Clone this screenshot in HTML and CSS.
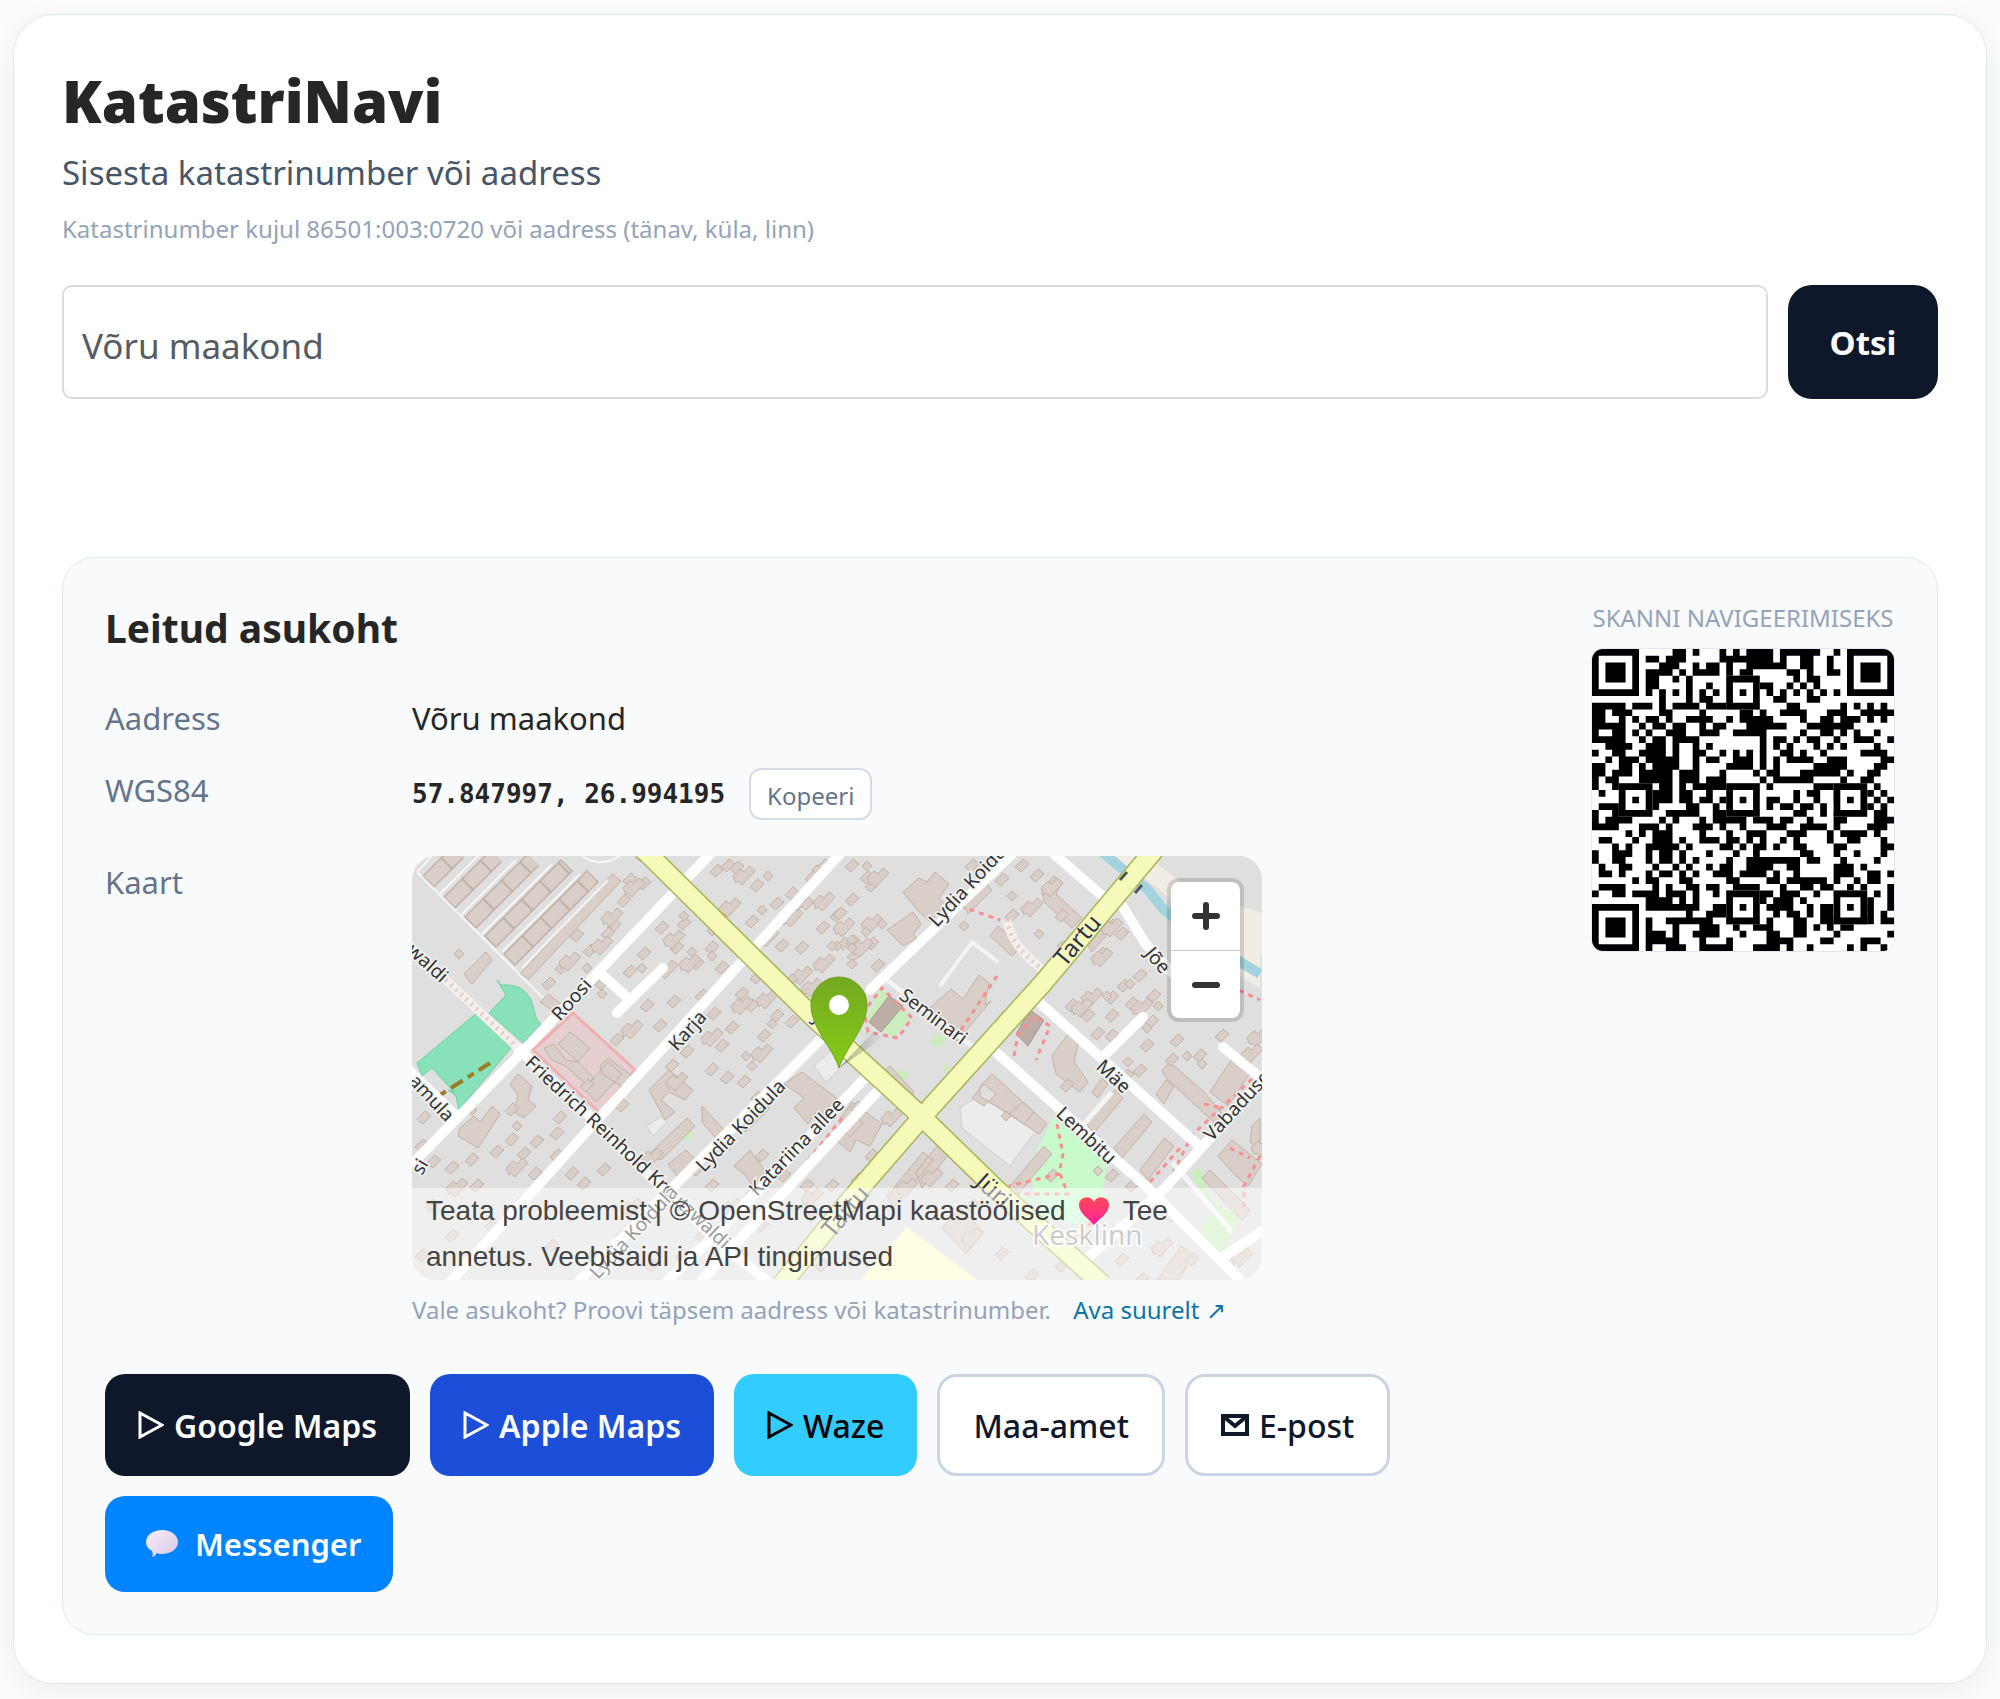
FILE: index.html
```html
<!DOCTYPE html>
<html lang="et">
<head>
<meta charset="utf-8">
<meta name="viewport" content="width=device-width, initial-scale=1">
<title>KatastriNavi</title>
<link rel="stylesheet" href="styles.css">
</head>
<body>
<main class="card">
  <header class="intro">
    <h1 class="title">KatastriNavi</h1>
    <p class="subtitle"><label for="query">Sisesta katastrinumber või aadress</label></p>
    <p class="hint">Katastrinumber kujul 86501:003:0720 või aadress (tänav, küla, linn)</p>
  </header>

  <form class="search">
    <input class="search-input" id="query" type="text" value="Võru maakond">
    <button class="search-button" type="submit">Otsi</button>
  </form>

  <section class="result">
    <div class="result-main">
      <h2 class="result-title">Leitud asukoht</h2>
      <dl class="facts">
        <dt>Aadress</dt>
        <dd>Võru maakond</dd>
        <dt>WGS84</dt>
        <dd class="coords"><code>57.847997, 26.994195</code><button class="copy" type="button">Kopeeri</button></dd>
        <dt class="map-term">Kaart</dt>
        <dd class="map-cell">
          <div class="map">
            <svg class="map-canvas" viewBox="0 0 850 424" preserveAspectRatio="xMidYMid slice" aria-hidden="true">
              <defs>
                <marker id="houseA" markerUnits="userSpaceOnUse" markerWidth="24" markerHeight="24" refX="12" refY="12"><path class="building" d="M5 13l8-8 6 5-8 8z"/></marker>
                <marker id="houseB" markerUnits="userSpaceOnUse" markerWidth="30" markerHeight="30" refX="15" refY="15"><path class="building" d="M4 17l7-7 4 3 5-6 6 5-13 14-4-4-2 2z"/></marker>
                <marker id="houseC" markerUnits="userSpaceOnUse" markerWidth="20" markerHeight="20" refX="10" refY="10"><path class="building" d="M5 10l5-5 5 5-5 5z"/></marker>
                <linearGradient id="pinFill" x1="0" y1="0" x2="0" y2="1"><stop offset="0" stop-color="#74a821"/><stop offset="1" stop-color="#86cc16"/></linearGradient>
                <linearGradient id="pinShade" x1="0" y1="0" x2="1" y2="0"><stop offset="0" stop-color="#444" stop-opacity=".45"/><stop offset="1" stop-color="#444" stop-opacity="0"/></linearGradient>
              </defs>
              <rect width="850" height="424" fill="#dfdfdf"/>
              <path fill="#f0ede5" d="M700 0l46 32 34 31 70 36V55L780 35 735 0zM760 80l88 52V50l-62-8z"/>
              <path fill="#dfdfdf" d="M745 0h105v57l-70-22z"/>
              <path fill="none" stroke="#a3d3df" stroke-width="10" d="M690-4l46 38 16 20 30 24 66 40"/>

              <!-- garages -->
              <path id="garage-edges" class="garage-edge" d="M16 26L46-4M37 47L84 0M58 67L121 4M78 86L155 9M97 104L181 20"/>
              <path class="garage" d="M17 25L46-4M38 46L84 0M59 66L121 4M79 85L154 10M98 103L180 21"/>
              <path class="building" d="M108 118l92-100 9 7-92 98z"/>
              <g fill="none" stroke="#f6f6f6" stroke-width="2"><path d="M5 16l136 136M5 16L20 0M28 38L67-1M49 59L104 4M70 78L140 8M90 96L168 18M110 112L196 24M170 0q20 14 44-4"/></g>

              <!-- parks and grounds -->
              <path fill="#88e1b9" stroke="#6fcfa3" d="M85 124l4 5q22-2 30 15l6 20 4 4-18 19-34-30 17-18zM66 156l33 36-52 62-3-14-8-6 6 2-22-24-10 8-5-13z"/>
              <path d="M28 239l50-32" stroke="#9b7d26" stroke-width="4" stroke-dasharray="7 6 14 6" fill="none"/>
              <path fill="#e6cfd0" stroke="#f0b0b0" stroke-width="3" d="M161 157l62 57-35 43-67-63z"/>
              <path fill="#c8facc" d="M641 261l54 40-4 36 10 10-30 22-44-8-10-50zM604 335l20 10-20 8z"/>
              <path fill="#c9eebb" d="M468 131l30 30-16 22-27-20zM523 178l12 4-6 9-10-4zM484 214l12 2-2 8-12-3zM531 208l6 3-4 6zM788 311l10 34 30 16-17 36-26-20 16-20-22-40zM266 279l8-9 8 6-7 10z"/>
              <path fill="#fbfcc9" d="M495 371l70 53H448z"/>
              <g fill="#ececec" stroke="#cfcfcf"><path d="M235 270l14-9 6 5-14 14zM402 210l20-18 14 12-22 22zM548 252l18-12 58 34-26 36-48-38z"/><path fill="none" stroke="#f4f4f4" stroke-width="4" d="M528 130l32-44 26 20"/></g>

              <!-- larger buildings -->
              <g class="building">
                <path d="M146 188l12-12 20 16-12 14zM132 192l10-4 12 16 12 2 16 16-6 8-22-20-14-6zM188 210l8-8 24 18-8 12-22-14zM172 232l24-26 14 12-26 28zM128 146l8-8 16 12-4 10z"/>
                <path d="M98 228l8-10 14 12-4 14 8 6-12 12-10-6 4-16zM48 272l14-12 6 6 12-16 8 8-22 34-20-12zM52 118l22-22 6 8-20 24zM237 234l20-20 24 20-8 10-16-8-8 8 14 12-10 8zM322 264l22-22 14 10-24 24zM372 228l18-12 40 30-14 14-12-4-8 12-14-16 10-10zM235 300l40-38 8 8-34 34zM290 250l24 26 4 18-6-2-22-26zM256 308l18-14 18 18-8 8-8-6-8 10zM322 310l16-16 16 22-12 16-8-12z"/>
                <path d="M517 153l22-20 12 10 16-24 10 8-4 22 6-4-34 40zM491 36l16-14 8 4 8-10 14 12-10 14 6 6-14 18-12-10zM475 74l26-18 8 12-8 10 4 4-14 8zM550 44l22-20 8 10-24 24zM578 80l8-10 24 20-10 10zM630 34l12-14 8 6-6 12 26 24-10 10-28-26zM672 84l20-22 10 8-22 26z"/>
                <path d="M568 230l12-12 42 38-10 12-44-28zM572 228l-12 14 12 8 12-12zM597 258l14-12 24 22-8 10zM600 328l32-38 8 8-34 40zM675 268l28-34 8 8-30 36zM702 292l30-34 8 8-30 36zM728 314l24-32 10 8-26 34zM750 214l8-8 34 30 20 24-6 10-24-22-28-26zM744 238l10-14 8 6-10 18zM798 236l24-36 18 14-24 36zM840 270l8-8v34l-10-10zM806 300l14-16 30 24-14 22-12-10zM640 200l16-22 10 10-4 18 14 20-8 10-24-18zM680 236l10-14 6 6-10 14z"/>
                <path d="M504 316l26-32 10 10-30 38zM466 220l12-10 24 26-8 8zM430 260l10-14 30 22-12 22-14-6-6 12-14-12zM475 340l36-44 10 8-40 48zM530 372l18-20 24 24-18 22zM745 424l24-34 12 8-14 26zM790 322l8-8 40 40-8 10z"/>
              </g>
              <g fill="#bcaea6" stroke="#a8988f"><path d="M457 166l20-26 14 10-22 26zM604 178l14-24 14 10-16 26z"/></g>

              <!-- houses -->
              <polyline class="houses-a" points="0,-40 218,24 232,28 202,70 212,45 178,95 165,80 150,112 137,128 196,78 230,0 325,12 345,30 305,15 316,10 316,55 340,66 350,86 365,48 400,22 412,10 380,38 395,48 440,44 425,60 432,88 411,72 390,92 370,90 272,68 265,92 250,72 300,92 310,112 285,108 232,98 218,116 190,128 205,184 235,150 248,170 262,146 290,140 302,158 330,138 345,122 365,160 380,166 352,180 340,150 320,172 310,190 300,214 260,210 315,222 332,226 275,196 148,262 175,230 100,284 112,298 125,286 145,300 160,318 172,328 192,314 145,278 123,318 65,330 60,304 85,296 40,312 22,306 10,290 12,262 100,254 210,250 300,330 340,336 372,320 395,330 350,300 430,344 440,10 460,30 455,22 428,58 441,86 460,88 466,110 442,100 430,140 610,10 625,20 600,60 560,10 590,24 650,60 700,70 710,78 690,98 728,120 712,130 742,140 720,148 700,142 700,160 740,166 765,185 760,204 788,200 810,180 735,190 728,215 715,220 700,180 660,150 676,160 686,178 655,230 700,320 720,330 640,320 690,380 710,404 760,360 780,404 730,424 650,410 620,420 590,398 560,350 540,330 460,300 446,324 420,330 400,360 440,400 410,410 350,370 330,400 290,380 270,400 240,410 210,380 180,400 160,360 140,390 100,400 80,370 40,380 20,350 10,400 0,-40"/>
              <polyline class="houses-b" points="0,-40 190,88 200,60 158,104 222,30 318,50 332,18 356,80 380,60 412,44 432,70 262,82 278,106 255,112 390,118 412,106 355,142 330,148 350,196 375,126 300,180 220,172 265,224 350,240 45,330 105,310 240,300 400,130 460,66 466,20 450,90 640,30 620,50 690,100 680,140 670,150 730,150 780,150 846,180 840,196 850,290 700,70 440,270 450,250 480,260 520,320 495,330 560,380 830,400 750,390 400,340 320,350 220,350 0,-40"/>
              <polyline class="houses-c" points="0,-40 47,98 175,112 280,96 300,100 350,54 405,14 425,90 300,75 272,60 356,20 385,50 230,112 190,138 334,200 340,210 360,168 420,90 440,84 454,76 470,68 552,70 627,78 455,10 440,92 718,128 746,150 695,140 790,208 775,200 735,172 716,206 686,315 594,260 650,90 600,40 440,108 60,254 105,270 0,-40"/>

              <!-- foot paths -->
              <g fill="none" stroke="#f88f8f" stroke-width="3" stroke-dasharray="5 5"><path d="M548 50l40 14M585 120l-24 36-16 24M456 150l14-18 30 30-14 20-30-6-4-22M602 200l4-22 16-18 16 10-14 34M645 268l6 30-4 20-50 12M648 318l8 20-50 0M738 326l30-34M840 223l-60 56-30 60M680 366l-34 30M848 300l-16 30v24M818 292l20 10M792 248l20 4M818 130l30 14M438 240l16-20M430 262l-40 50-42 44"/></g>
              <path fill="none" stroke="#f4f4f4" stroke-width="5" d="M475 124l90 70M700 236l-28 32M760 306l60 70"/>

              <!-- streets -->
              <g class="streets">
                <path d="M298-2L115 191 2 306M428-2L188 261 40 424M600-2L458 134M408 184L255 337 168 424M455 220l-147 154-52 50M465 236L290 424M105 191l80 76 70 70 53 50 46 37M188 117l30 27 33-32M218 144l-13 13M-2 215l47 46M585 197l153 137 90 90M628 147l160 144M850 225L751 334 678 400M731 161l-40 40M811 191l39 32M642-2l53 46M711 51l22 36 27 30M811 401l39-26"/>
              </g>
              <path d="M-2 90l107 101M595 64q4 26 36 50" fill="none" stroke="#f5efed" stroke-width="9"/>
              <path d="M-2 90l107 101M595 64q4 26 36 50" fill="none" stroke="#dcc" stroke-width="5" stroke-dasharray="2 5"/>
              <g class="road-edge"><path d="M232-6l169 167 109 100 75 73 105 94M744-8L631 127 510 261 438 344 370 428"/></g>
              <g class="road"><path d="M232-6l169 167 109 100 75 73 105 94M744-8L631 127 510 261 438 344 370 428"/></g>
              <path d="M708 24l7-8M723 37l7-8" stroke="#555" stroke-width="3"/>

              <!-- names -->
              <g class="names">
                <text transform="translate(148 166) rotate(-48)">Roosi</text>
                <text transform="translate(265 196) rotate(-48)">Karja</text>
                <text transform="translate(292 317) rotate(-46)">Lydia Koidula</text>
                <text transform="translate(345 341) rotate(-46)">Katariina allee</text>
                <text transform="translate(112 208) rotate(43)">Friedrich Reinhold Kreutzwaldi</text>
                <text transform="translate(-6 96) rotate(42)">waldi</text>
                <text transform="translate(-4 226) rotate(47)">amula</text>
                <text transform="translate(10 320) rotate(-60)">si</text>
                <text transform="translate(525 72) rotate(-47)">Lydia Koidula</text>
                <text transform="translate(486 142) rotate(37)">Seminari</text>
                <text transform="translate(643 259) rotate(43)">Lembitu</text>
                <text transform="translate(683 212) rotate(43)">Mäe</text>
                <text transform="translate(800 286) rotate(-47)">Vabaduse</text>
                <text transform="translate(732 98) rotate(50)">Jõe</text>
                <text transform="translate(186 424) rotate(-47)">Lydia Koidula</text>
                <text transform="translate(400 165) rotate(43)">J</text>
              </g>
              <g class="names names-large">
                <text transform="translate(653 112) rotate(-50)">Tartu</text>
                <text transform="translate(421 383) rotate(-50)">Tartu</text>
                <text transform="translate(562 328) rotate(42)">Jüri</text>
              </g>
              <text class="district" x="620" y="389">Kesklinn</text>

              <!-- pin -->
              <path fill="url(#pinShade)" d="M427 212l34-36 10 6z"/>
              <path fill="url(#pinFill)" stroke="#6fa01c" d="M427 212c-6-20-28-40-28-63a28 28 0 0 1 56 0c0 23-22 43-28 63z"/>
              <circle cx="427" cy="149" r="10" fill="#fff"/>
            </svg>
            <div class="zoom">
              <button class="zoom-button" type="button" aria-label="Suurenda"><svg width="28" height="28" viewBox="0 0 28 28"><path d="M3 14h22M14 3v22"/></svg></button>
              <button class="zoom-button" type="button" aria-label="Vähenda"><svg width="28" height="28" viewBox="0 0 28 28"><path d="M3 14h22"/></svg></button>
            </div>
            <p class="attribution">Teata probleemist | © OpenStreetMapi kaastöölised <svg class="heart" viewBox="0 0 30 28"><defs><linearGradient id="love" x1="0" y1="0" x2="0" y2="1"><stop offset="0" stop-color="#ff4a55"/><stop offset="1" stop-color="#ff1fa0"/></linearGradient></defs><path fill="url(#love)" d="M15 28C9 21 0 16 0 8 0 0 11-3 15 5c4-8 15-5 15 3 0 8-9 13-15 20z"/></svg> Tee annetus. Veebisaidi ja API tingimused</p>
          </div>
          <p class="map-note">Vale asukoht? Proovi täpsem aadress või katastrinumber. <a class="map-link" href="#suurelt">Ava suurelt ↗</a></p>
        </dd>
      </dl>
      <nav class="actions">
        <a class="action action-google" href="#google"><svg class="play" viewBox="0 0 26 28"><path d="M2 2v24l22-12z"/></svg>Google Maps</a>
        <a class="action action-apple" href="#apple"><svg class="play" viewBox="0 0 26 28"><path d="M2 2v24l22-12z"/></svg>Apple Maps</a>
        <a class="action action-waze" href="#waze"><svg class="play" viewBox="0 0 26 28"><path d="M2 2v24l22-12z"/></svg>Waze</a>
        <a class="action action-plain" href="#maaamet">Maa-amet</a>
        <a class="action action-plain" href="#epost"><svg class="mail" viewBox="0 0 28 22"><path d="M2 2h24v18H2zM2 2l12 10L26 2"/></svg>E-post</a>
        <a class="action action-messenger" href="#messenger"><svg class="bubble" viewBox="0 0 34 28"><defs><linearGradient id="talk" x1="0" y1="0" x2="1" y2="1"><stop offset="0" stop-color="#f7eef8"/><stop offset="1" stop-color="#d9c8e6"/></linearGradient></defs><path fill="url(#talk)" d="M17 0c9 0 16 5 16 12s-7 12-16 12c-2 0-3 0-5-1-2 3-4 4-5 4 1-2 1-4 0-6-4-2-6-5-6-9C1 5 8 0 17 0z"/></svg>Messenger</a>
      </nav>
    </div>

    <figure class="qr">
      <figcaption class="qr-label">SKANNI NAVIGEERIMISEKS</figcaption>
      <svg class="qr-code" viewBox="0 0 45 45" role="img" aria-label="QR-kood">
        <rect width="45" height="45" fill="#fff"/>
        <g transform="translate(0 .5)" fill="none" stroke="#000">
          <path d="M12 0h2M15 0h1M19 0h1M21 0h1M23 0h4M28 0h6M36 0h1
M8 1h2M11 1h3M19 1h8M28 1h1M31 1h2M35 1h1
M10 2h3M15 2h1M17 2h2M20 2h1M23 2h6M31 2h2M35 2h1
M8 3h4M13 3h1M15 3h4M20 3h1M22 3h2M29 3h2M32 3h1M35 3h2
M8 4h2M12 4h1M14 4h1M20 4h5M30 4h1M32 4h2
M8 5h2M14 5h1M17 5h1M25 5h2M29 5h1M31 5h1M33 5h1
M8 6h1M10 6h1M12 6h1M14 6h1M16 6h1M18 6h1M26 6h1M28 6h1M30 6h1M32 6h1M34 6h1M36 6h1
M10 7h1M14 7h1M16 7h2M27 7h2M32 7h2
M0 8h5M6 8h3M10 8h1M12 8h4M17 8h8M29 8h2M37 8h1M39 8h1M41 8h1M43 8h1
M0 9h2M3 9h3M10 9h2M16 9h1M22 9h2M25 9h1M28 9h4M35 9h3M40 9h5
M0 10h2M4 10h1M6 10h1M8 10h2M11 10h1M14 10h4M20 10h1M22 10h5M31 10h1M34 10h2M37 10h3M41 10h1M43 10h1
M0 11h5M7 11h1M9 11h2M12 11h2M16 11h1M18 11h2M23 11h6M32 11h7
M0 12h1M3 12h2M6 12h1M8 12h1M11 12h3M16 12h3M21 12h5M31 12h1M34 12h2M37 12h1M39 12h1M42 12h1
M0 13h5M7 13h1M9 13h2M12 13h4M25 13h1M27 13h2M30 13h1M32 13h2M36 13h1M39 13h3M44 13h1
M2 14h4M8 14h3M12 14h1M15 14h1M17 14h1M25 14h1M27 14h1M29 14h1M33 14h1M35 14h1M37 14h1M42 14h1
M0 15h1M3 15h2M7 15h4M12 15h1M15 15h2M19 15h1M21 15h1M23 15h1M25 15h1M28 15h2M31 15h1M34 15h1M40 15h4
M2 16h1M4 16h3M8 16h5M15 16h1M17 16h2M21 16h3M25 16h1M27 16h1M29 16h4M35 16h3M43 16h2
M0 17h2M4 17h2M7 17h1M9 17h4M15 17h1M20 17h4M25 17h1M27 17h1M33 17h5M42 17h2
M0 18h2M3 18h3M7 18h1M8 18h4M13 18h3M19 18h1M24 18h1M26 18h2M31 18h6M38 18h1M41 18h2
M0 19h1M2 19h2M7 19h5M13 19h3M17 19h3M25 19h1M27 19h6M37 19h1M40 19h2
M0 20h1M3 20h6M10 20h2M13 20h1M15 20h10M26 20h1M33 20h8M42 20h1
M1 21h1M4 21h1M8 21h4M13 21h2M17 21h1M24 21h1M30 21h1M32 21h2M36 21h1M41 21h1M43 21h1
M4 22h1M8 22h4M13 22h2M16 22h2M19 22h1M26 22h2M30 22h1M33 22h1M36 22h1M40 22h1M42 22h1M44 22h1
M1 23h4M8 23h2M14 23h2M18 23h1M26 23h1M28 23h2M31 23h2M34 23h1M41 23h1M43 23h1
M0 24h1M3 24h6M11 24h5M18 24h7M30 24h2M34 24h1M36 24h5M42 24h2
M0 25h1M2 25h4M10 25h1M12 25h1M16 25h1M18 25h5M24 25h3M28 25h2M32 25h1M36 25h2M42 25h3
M0 26h4M7 26h3M11 26h1M15 26h3M19 26h1M22 26h1M26 26h3M31 26h4M36 26h1M41 26h3
M5 27h1M7 27h1M9 27h3M16 27h1M20 27h1M23 27h3M29 27h3M35 27h1M37 27h4M42 27h1
M1 28h2M6 28h1M9 28h3M13 28h1M16 28h3M20 28h2M23 28h1M25 28h1M28 28h1M30 28h1M35 28h1M38 28h2M43 28h1
M3 29h1M5 29h1M8 29h5M14 29h1M19 29h2M22 29h1M24 29h2M27 29h1M30 29h2M36 29h2M43 29h2
M0 30h1M3 30h3M8 30h1M10 30h2M13 30h1M17 30h1M21 30h1M24 30h1M31 30h2M36 30h1M39 30h1M43 30h1
M0 31h1M3 31h2M8 31h1M10 31h2M13 31h1M15 31h1M20 31h1M23 31h8M32 31h2M37 31h1M42 31h1
M1 32h1M4 32h2M9 32h1M12 32h1M14 32h1M17 32h1M19 32h2M23 32h4M29 32h2M36 32h3M40 32h1
M1 33h2M4 33h1M8 33h1M10 33h2M13 33h1M15 33h1M18 33h3M22 33h4M27 33h1M30 33h1M36 33h3M41 33h2M44 33h1
M6 34h1M8 34h2M13 34h2M20 34h2M26 34h2M29 34h6M36 34h1M39 34h1M41 34h2
M1 35h4M9 35h1M11 35h1M14 35h2M17 35h2M21 35h4M28 35h1M31 35h2M34 35h2M38 35h1M40 35h1M44 35h1
M0 36h1M3 36h2M6 36h4M11 36h3M15 36h1M18 36h1M20 36h7M28 36h3M33 36h1M36 36h5M42 36h1M44 36h1
M8 37h4M13 37h1M15 37h1M25 37h1M27 37h3M31 37h1M41 37h1M44 37h1
M8 38h8M18 38h2M26 38h4M32 38h1M34 38h2M40 38h2M44 38h1
M14 39h1M17 39h3M27 39h1M29 39h2M32 39h1M34 39h2M41 39h1M43 39h1
M8 40h1M11 40h7M20 40h5M26 40h1M30 40h2M34 40h8M43 40h2
M8 41h1M12 41h1M16 41h3M21 41h1M24 41h3M30 41h2M33 41h1M35 41h1M37 41h2
M8 42h3M12 42h1M15 42h4M22 42h1M26 42h2M30 42h2M36 42h1M44 42h1
M8 43h3M11 43h2M16 43h1M20 43h1M26 43h4M34 43h2M40 43h3
M8 44h1M11 44h3M16 44h5M24 44h4M29 44h1M32 44h1M38 44h1M40 44h1M43 44h1"/>
        </g>
        <path fill-rule="evenodd" d="M0 0h7v7H0zM1 1v5h5V1zM2 2h3v3H2zM38 0h7v7h-7zM39 1v5h5V1zM40 2h3v3h-3zM0 38h7v7H0zM1 39v5h5v-5zM2 40h3v3H2z"/>
        <path fill="#fff" d="M4 20h5v5H4zM20 4h5v5h-5zM20 20h5v5h-5zM20 36h5v5h-5zM36 20h5v5h-5zM36 36h5v5h-5z"/>
        <path fill-rule="evenodd" d="M4 20h5v5H4zM5 21v3h3v-3zM6 22h1v1H6zM20 4h5v5h-5zM21 5v3h3V5zM22 6h1v1h-1zM20 20h5v5h-5zM21 21v3h3v-3zM22 22h1v1h-1zM20 36h5v5h-5zM21 37v3h3v-3zM22 38h1v1h-1zM36 20h5v5h-5zM37 21v3h3v-3zM38 22h1v1h-1zM36 36h5v5h-5zM37 37v3h3v-3zM38 38h1v1h-1z"/>
      </svg>
    </figure>
  </section>
</main>
</body>
</html>
```
FILE: styles.css
```css
* { box-sizing: border-box; }

body {
  margin: 0;
  padding: 14px 13px;
  background: #fcfcfd;
  color: #262626;
  font-family: "Noto Sans", "Open Sans", sans-serif;
}

h1, h2, p, dl, dd, figure { margin: 0; }

.card {
  padding: 46px 48px 48px;
  background: #fff;
  border: 1px solid #e2e8f0;
  border-radius: 40px;
  box-shadow: 0 8px 32px rgba(15, 23, 42, 0.06);
}

.title { font-family: "Open Sans", "Noto Sans", sans-serif; font-size: 58px; line-height: 80px; font-weight: 800; }
.subtitle { margin-top: 12px; font-size: 33px; line-height: 40px; color: #475569; }
.hint { margin-top: 20px; font-size: 24px; line-height: 32px; color: #94a3b8; }

.search { display: flex; gap: 20px; margin-top: 40px; }
.search-input {
  flex: 1;
  min-width: 0;
  height: 114px;
  padding: 6px 18px 0;
  border: 2px solid #dcdcdf;
  border-radius: 10px;
  background: #fff;
  color: #555b62;
  font: inherit;
  font-size: 35px;
}
.search-button {
  width: 150px;
  border: 0;
  border-radius: 24px;
  background: #0f172a;
  color: #fff;
  font: inherit;
  font-size: 33px;
  font-weight: 700;
}

.result {
  display: flex;
  align-items: flex-start;
  gap: 24px;
  margin-top: 158px;
  padding: 40px 42px 42px;
  background: #f8fafc;
  border: 1px solid #e2e8f0;
  border-radius: 32px;
}
.result-main { flex: 1; min-width: 0; }
.result-title { font-size: 39px; line-height: 60px; font-weight: 700; }

.facts {
  display: grid;
  grid-template-columns: 307px 1fr;
  margin-top: 38px;
  font-size: 31px;
  line-height: 44px;
}
.facts dt { color: #64748b; }
.coords { display: flex; align-items: center; gap: 24px; height: 52px; margin: 28px 0 36px; }
.facts dt:nth-of-type(2) { margin-top: 28px; }
.coords code { font-family: "DejaVu Sans Mono", monospace; font-size: 26px; font-weight: 700; }
.copy {
  height: 52px;
  padding: 4px 16px 0;
  background: #fff;
  border: 2px solid #d5dce5;
  border-radius: 12px;
  color: #64748b;
  font: inherit;
  font-size: 24px;
}
.map-term { padding-top: 4px; }

.map {
  position: relative;
  width: 100%;
  max-width: 850px;
  aspect-ratio: 850 / 424;
  overflow: hidden;
  border-radius: 24px;
}
.map-canvas { display: block; width: 100%; height: 100%; }
.building { fill: #d9cfc8; stroke: #c2b0a6; stroke-width: 1px; }
.garage-edge { fill: none; stroke: #c2b0a6; stroke-width: 17px; }
.garage { fill: none; stroke: #d9cfc8; stroke-width: 14px; stroke-dasharray: 24px 2px; }
.houses-a, .houses-b, .houses-c { fill: none; stroke: none; }
.houses-a { marker-mid: url(#houseA); }
.houses-b { marker-mid: url(#houseB); }
.houses-c { marker-mid: url(#houseC); }
.streets { fill: none; stroke: #fff; stroke-width: 10px; stroke-linecap: round; }
.road-edge { fill: none; stroke: #a8b45a; stroke-width: 21px; }
.road { fill: none; stroke: #f5fab8; stroke-width: 18px; }
.names { fill: #333; stroke: #f2f2f2; stroke-width: 3px; paint-order: stroke; font-size: 19px; }
.names-large { font-size: 24px; stroke-width: 1px; }
.district { fill: #999; stroke: #fff; stroke-width: 3px; paint-order: stroke; font-size: 28px; }

.zoom {
  position: absolute;
  top: 22px;
  right: 18px;
  width: 77px;
  border: 4px solid rgba(0, 0, 0, 0.14);
  border-radius: 12px;
  background: #fff;
  background-clip: padding-box;
}
.zoom-button {
  display: flex;
  align-items: center;
  justify-content: center;
  width: 100%;
  height: 68px;
  padding: 0;
  border: 0;
  background: none;
}
.zoom-button + .zoom-button { border-top: 1px solid #ccc; }
.zoom-button path { fill: none; stroke: #333; stroke-width: 6px; stroke-linecap: round; }

.attribution {
  position: absolute;
  right: 0;
  bottom: 0;
  left: 0;
  padding: 0 60px 0 14px;
  background: rgba(255, 255, 255, 0.5);
  color: #444;
  font-family: "Liberation Sans", Arial, sans-serif;
  font-size: 28px;
  line-height: 46px;
}
.heart { width: 30px; height: 28px; margin: 0 6px; vertical-align: -5px; }

.map-note { margin-top: 12px; color: #94a3b8; font-size: 24px; line-height: 36px; }
.map-link { margin-left: 16px; color: #0c75a8; text-decoration: none; }

.actions { display: flex; flex-wrap: wrap; gap: 20px; margin-top: 46px; }
.action {
  display: flex;
  align-items: center;
  gap: 10px;
  height: 102px;
  padding: 0 33px;
  border-radius: 20px;
  font-size: 32px;
  font-weight: 600;
  text-decoration: none;
}
.action-google { background: #0f172a; color: #fff; }
.action-apple { background: #1d4ed8; color: #fff; }
.action-waze { background: #33ccff; color: #000; font-weight: 500; }
.action-plain { background: #fff; border: 3px solid #cbd5e1; color: #0f172a; font-weight: 500; }
.action-messenger { height: 96px; gap: 16px; padding: 0 32px 0 40px; background: #0084ff; color: #fff; font-size: 31px; }
.play { width: 26px; height: 28px; fill: none; stroke: currentColor; stroke-width: 3px; }
.mail { width: 28px; height: 22px; fill: none; stroke: currentColor; stroke-width: 4px; }
.bubble { width: 34px; height: 28px; }

.qr { display: flex; flex-direction: column; align-items: center; gap: 12px; padding-top: 2px; }
.qr-label { color: #94a3b8; font-size: 24px; line-height: 36px; }
.qr-code { width: 304px; height: 304px; border: 1px solid #e2e8f0; border-radius: 12px; }
```
